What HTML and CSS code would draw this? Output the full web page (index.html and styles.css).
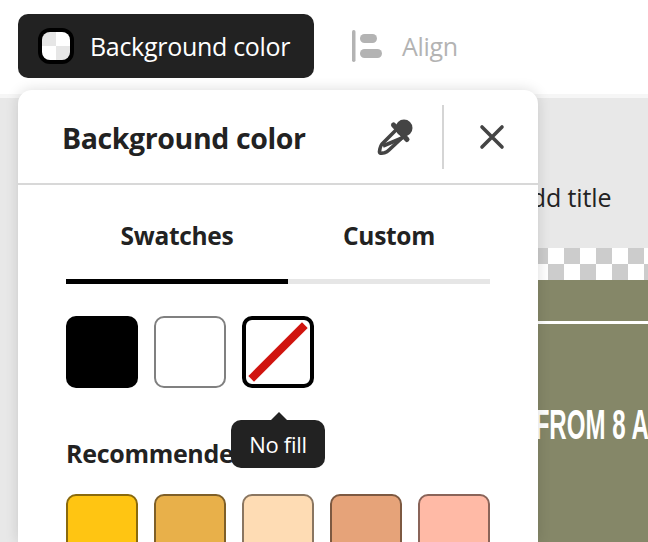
FILE: index.html
```html
<!DOCTYPE html>
<html lang="en">
<head>
    <meta charset="UTF-8">
    <meta name="viewport" content="width=device-width, initial-scale=1.0">
    <title>Background color</title>
    <link rel="stylesheet" href="styles.css">
</head>
<body>
    <div class="topbar">
        <button class="tool tool-active">
            <span class="chip"><span class="chip-checks"></span></span>
            Background color
        </button>
        <button class="tool tool-off">
            <svg class="align-icon" width="36" height="32" viewBox="0 0 36 32">
                <rect x="4" y="0" width="3.500" height="32" rx="1.700" fill="#b3b3b3"/>
                <rect x="12" y="4" width="17" height="9" rx="4.500" fill="#b3b3b3"/>
                <rect x="12" y="19" width="22" height="9" rx="4.500" fill="#b3b3b3"/>
            </svg>
            Align
        </button>
    </div>

    <div class="canvas">
        <div class="canvas-title">Add title</div>
        <div class="checks"></div>
        <div class="poster">
            <div class="poster-rule"></div>
            <div class="poster-text">FROM 8 AM</div>
        </div>
    </div>

    <div class="panel">
        <div class="panel-head">
            <h2>Background color</h2>
            <svg class="dropper" width="36" height="36" viewBox="0 0 36 36">
                <path d="M20 10L5 25Q3.500 27 3 29.500L2.500 32.500Q2.300 34.500 4.500 34.200L7.500 33.700Q10 33 12 31L27 17Z" fill="#fff" stroke="#444" stroke-width="3.600" stroke-linejoin="round"/>
                <path d="M6 27L25 19" stroke="#444" stroke-width="3.600"/>
                <path d="M16.500 6L30 20.500" stroke="#444" stroke-width="5" stroke-linecap="round"/>
                <circle cx="27" cy="9" r="8.500" fill="#444"/>
            </svg>
            <span class="head-divider"></span>
            <svg class="close" width="26" height="26" viewBox="0 0 26 26">
                <path d="M3 3l20 20M23 3L3 23" stroke="#444" stroke-width="3.600" stroke-linecap="round"/>
            </svg>
        </div>

        <div class="panel-body">
            <div class="tabs">
                <div class="tab tab-first">Swatches</div>
                <div class="tab tab-second">Custom</div>
            </div>

            <div class="swatch-row">
                <div class="swatch swatch-black"></div>
                <div class="swatch swatch-white"></div>
                <div class="swatch swatch-none">
                    <svg width="64" height="64" viewBox="0 0 64 64">
                        <path d="M8 56L56 8" stroke="#d0140f" stroke-width="8" stroke-linecap="square"/>
                    </svg>
                    <div class="tooltip">No fill</div>
                </div>
            </div>

            <h3>Recommended</h3>

            <div class="swatch-row">
                <div class="swatch swatch-rec" style="background: #ffc512; border-color: #8a6a0c"></div>
                <div class="swatch swatch-rec" style="background: #e8b04a; border-color: #7e5f28"></div>
                <div class="swatch swatch-rec" style="background: #fedcb4; border-color: #8a7661"></div>
                <div class="swatch swatch-rec" style="background: #e6a379; border-color: #7d5941"></div>
                <div class="swatch swatch-rec" style="background: #ffbaa6; border-color: #8a6459"></div>
            </div>
        </div>
    </div>
</body>
</html>
```

FILE: styles.css
```css
html, body {
    margin: 0;
    height: 100%;
}
body {
    width: 648px;
    height: 542px;
    overflow: hidden;
    position: relative;
    background: #fff;
    font-family: "Open Sans", "Noto Sans", sans-serif;
    color: #222;
}
.topbar {
    height: 94px;
    box-sizing: border-box;
    padding: 14px 18px 0;
    display: flex;
    align-items: flex-start;
    gap: 34px;
}
.tool {
    height: 64px;
    border: none;
    background: none;
    font: inherit;
    font-size: 25px;
    display: flex;
    align-items: center;
    padding: 0;
    letter-spacing: -0.3px;
}
.tool-active {
    width: 296px;
    padding-left: 20px;
    gap: 16px;
    background: #222;
    color: #fff;
    border-radius: 10px;
}
.tool-off {
    color: #b3b3b3;
    gap: 18px;
}
.chip {
    width: 36px;
    height: 36px;
    box-sizing: border-box;
    border: 4px solid #000;
    border-radius: 12px;
    overflow: hidden;
}
.chip-checks {
    display: block;
    height: 100%;
    background: conic-gradient(#fff 0 25%, #e6e6e6 0 50%, #fff 0 75%, #e6e6e6 0);
}
.canvas {
    height: 448px;
    background: #e8e8e8;
    padding-left: 538px;
    box-shadow: inset 0 4px 0 #f6f6f6;
}
.canvas-title {
    height: 154px;
    box-sizing: border-box;
    padding-top: 86px;
    font-size: 25px;
    white-space: nowrap;
    text-indent: -23px;
    letter-spacing: -0.1px;
}
.checks {
    height: 32px;
    background-color: #fff;
    background-image: conic-gradient(#ccc 0 25%, #fff 0 50%, #ccc 0 75%, #fff 0);
    background-size: 32px 32px;
    background-position: -22px 0;
}
.poster {
    height: 262px;
    background: #858768;
    padding-top: 41px;
}
.poster-rule {
    height: 3px;
    background: #fff;
}
.poster-text {
    margin-top: 76px;
    font-family: "Liberation Sans", sans-serif;
    font-weight: bold;
    font-size: 43px;
    color: #fff;
    white-space: nowrap;
    transform: scaleX(0.56);
    transform-origin: left;
    text-indent: -6px;
}
.panel {
    position: absolute;
    left: 18px;
    top: 90px;
    width: 520px;
    height: 452px;
    overflow: hidden;
    background: #fff;
    border-radius: 14px 14px 0 0;
    box-shadow: 0 0 14px rgba(0, 0, 0, 0.14);
}
.panel-head {
    height: 93px;
    border-bottom: 2px solid #d8d8d8;
    display: flex;
    align-items: center;
    padding-left: 44px;
}
.panel-head h2 {
    margin: 2px 0 0;
    font-size: 28.500px;
    font-weight: 700;
    letter-spacing: -0.4px;
    flex: 1;
}
.dropper {
    margin-right: 29px;
}
.head-divider {
    width: 2px;
    height: 64px;
    background: #d5d5d5;
    margin-right: 35px;
}
.close {
    margin-right: 33px;
}
.panel-body {
    padding: 0 48px;
}
.tabs {
    display: flex;
    height: 99px;
    box-sizing: border-box;
    background:
        linear-gradient(#000, #000) left bottom / 222px 5px no-repeat,
        linear-gradient(#e6e6e6, #e6e6e6) left bottom / 100% 5px no-repeat;
    margin-bottom: 32px;
}
.tab {
    padding-top: 34px;
    text-align: center;
    font-size: 24.500px;
    font-weight: 700;
    letter-spacing: -0.3px;
}
.tab-first {
    width: 222px;
}
.tab-second {
    width: 202px;
}
.swatch-row {
    display: flex;
    gap: 16px;
}
.swatch {
    width: 72px;
    height: 72px;
    box-sizing: border-box;
    border-radius: 10px;
    position: relative;
    flex: none;
}
.swatch-black {
    background: #000;
}
.swatch-white {
    border: 2px solid #808080;
}
.swatch-none {
    border: 4px solid #000;
}
.swatch-none svg {
    display: block;
}
.swatch-rec {
    border: 2px solid;
}
.tooltip {
    position: absolute;
    left: -15px;
    top: 100px;
    width: 94px;
    height: 48px;
    background: #222;
    color: #fff;
    border-radius: 10px;
    font-size: 22px;
    letter-spacing: -0.3px;
    text-align: center;
    line-height: 48px;
}
.tooltip::before {
    content: "";
    position: absolute;
    left: 40px;
    top: -8px;
    border: 8px solid transparent;
    border-top: none;
    border-bottom-color: #222;
}
h3 {
    margin: 47px 0 23px;
    font-size: 25px;
    line-height: 36px;
    font-weight: 700;
    letter-spacing: -0.3px;
}
```
